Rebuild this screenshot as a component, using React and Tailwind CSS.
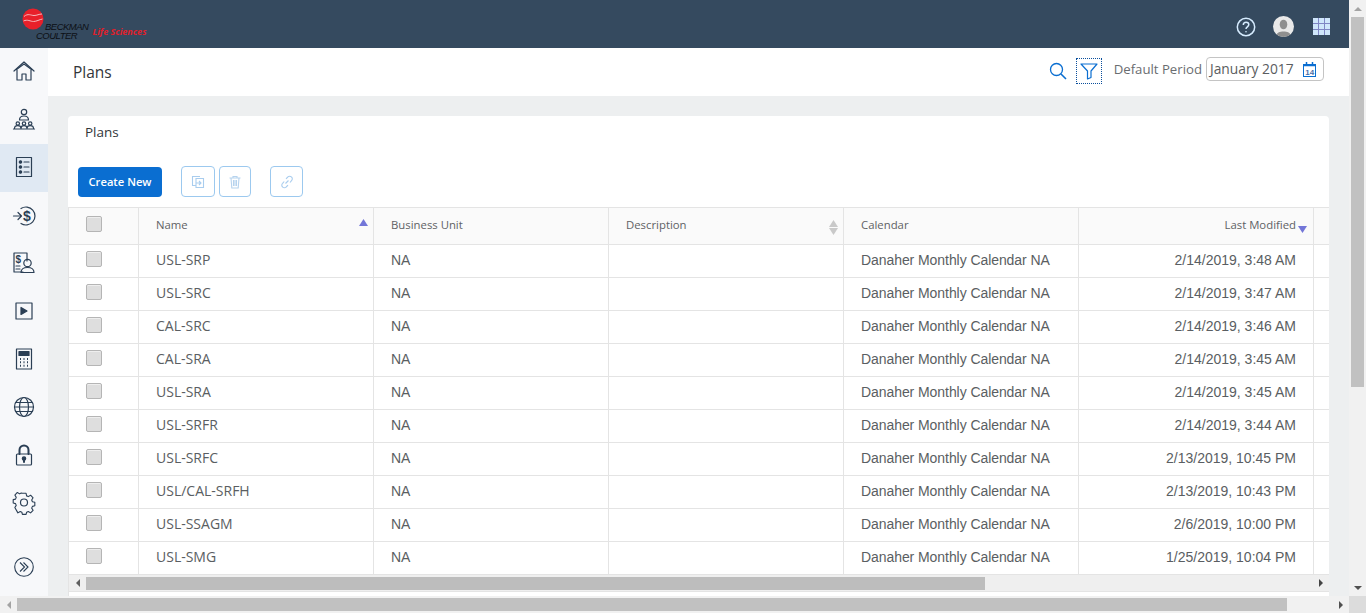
import React from "react";

const rows = [
  ["USL-SRP", "2/14/2019, 3:48 AM"],
  ["USL-SRC", "2/14/2019, 3:47 AM"],
  ["CAL-SRC", "2/14/2019, 3:46 AM"],
  ["CAL-SRA", "2/14/2019, 3:45 AM"],
  ["USL-SRA", "2/14/2019, 3:45 AM"],
  ["USL-SRFR", "2/14/2019, 3:44 AM"],
  ["USL-SRFC", "2/13/2019, 10:45 PM"],
  ["USL/CAL-SRFH", "2/13/2019, 10:43 PM"],
  ["USL-SSAGM", "2/6/2019, 10:00 PM"],
  ["USL-SMG", "1/25/2019, 10:04 PM"],
];

const S = ({ children, w = 24, h = 24, vb = "0 0 24 24", c = "#2b3f55", sw = 1.2 }) => (
  <svg width={w} height={h} viewBox={vb} fill="none" stroke={c} strokeWidth={sw} strokeLinecap="round" strokeLinejoin="round">
    {children}
  </svg>
);

const navIcons = [
  <S key="h"><path d="M2 12 12 3l10 9" /><path d="M4.500 10.500 12 5l7.500 5.500" /><path d="M5 11v10h5v-6h4v6h5V11" /></S>,
  <S key="o"><circle cx="12" cy="5" r="2.700" /><path d="M7.500 13c0-3 2-4 4.500-4s4.500 1 4.500 4z" /><circle cx="5.800" cy="16.500" r="1.700" /><circle cx="12" cy="16.500" r="1.700" /><circle cx="18.200" cy="16.500" r="1.700" /><path d="M2.500 21.500c0-2 1.500-2.800 3.300-2.800s3.200.8 3.200 2.800M9 21.500c0-2 1.200-2.800 3-2.800s3 .8 3 2.800M15 21.500c0-2 1.400-2.800 3.200-2.800s3.300.8 3.300 2.800" /><path d="M1.500 22h21" /></S>,
  <S key="l"><rect x="4.500" y="2.500" width="15" height="19" /><circle cx="8.500" cy="7" r="1.200" fill="#2b3f55" /><circle cx="8.500" cy="12" r="1.200" fill="#2b3f55" /><circle cx="8.500" cy="17" r="1.200" fill="#2b3f55" /><path d="M12 7h5M12 12h5M12 17h5" /></S>,
  <S key="d"><path d="M9 5.500A9 9 0 1 1 9 20.500" /><path d="M1.500 13H9M6 9.500 9.500 13 6 16.500" /><text x="11" y="18" fontSize="14" fontWeight="700" fill="#2b3f55" stroke="none" fontFamily="Liberation Sans">$</text></S>,
  <S key="p"><path d="M11 21H2V2h13v8" /><text x="3.500" y="12" fontSize="10" fontWeight="700" fill="#2b3f55" stroke="none" fontFamily="Liberation Sans">$</text><path d="M4 15h4M4 18h4" /><circle cx="15.500" cy="12" r="3.700" /><path d="M9 21.500c0-3.500 2.500-5 6.500-5s6.500 1.500 6.500 5z" /></S>,
  <S key="v"><rect x="4" y="4" width="16" height="16" /><path d="M9 8.500v7l6-3.500z" fill="#2b3f55" /></S>,
  <S key="c"><rect x="4.500" y="2" width="15" height="20" /><rect x="7" y="4.500" width="10" height="4" fill="#2b3f55" /><path d="M8 12h1M11.500 12h1M15 12h1M8 15.300h1M11.500 15.300h1M15 15.300h1M8 18.700h1M11.500 18.700h1M15 18.700h1" strokeWidth="2" strokeLinecap="butt" /></S>,
  <S key="g"><circle cx="12" cy="12" r="9.500" /><ellipse cx="12" cy="12" rx="4.500" ry="9.500" /><path d="M2.500 12h19M3.800 7.500h16.400M3.800 16.500h16.400" /></S>,
  <S key="k"><path d="M7.500 11V7a4.500 4.500 0 0 1 9 0v4" strokeWidth="2" /><rect x="4.500" y="11" width="15" height="11" rx="1" /><circle cx="12" cy="15.500" r="1.700" fill="#2b3f55" /><path d="M12 16v3" strokeWidth="2" /></S>,
  <S key="s"><path d="M10 2.500h4l.6 2.800 1.800.8 2.500-1.500 2.700 2.800-1.500 2.400.8 1.900 2.600.6v3.800l-2.600.6-.8 1.900 1.500 2.400-2.700 2.800-2.500-1.500-1.800.8-.6 2.300h-4l-.6-2.300-1.800-.8-2.500 1.500L1.800 18l1.500-2.400-.8-1.900L0 13V9.400l2.500-.6.800-1.900L1.800 4.400l2.700-2.800L7 3.100l1.800-.8z" transform="translate(1.200 0) scale(.92)" /><circle cx="12" cy="11.500" r="3.500" /></S>,
];

const cell = "border-l border-[#e4e4e4] h-full flex items-center pb-[2px]";

function Check() {
  return <span className="block w-4 h-4 rounded-[2px] bg-[#dedede] border border-[#b5b5b5] shadow-[inset_0_1px_0_#eeeeee]" />;
}

function Arrow({ d, c = "#5f5f5f" }) {
  const map = {
    up: "M0 4 4 0l4 4z",
    down: "M0 0h8L4 4z",
    left: "M4 0v8L0 4z",
    right: "M0 0v8l4-4z",
  };
  const vert = d === "up" || d === "down";
  return (
    <svg width={vert ? 8 : 4} height={vert ? 4 : 8} viewBox={vert ? "0 0 8 4" : "0 0 4 8"} fill={c}>
      <path d={map[d]} />
    </svg>
  );
}

function SortTri({ dir, c }) {
  return (
    <svg width="9" height="7" viewBox="0 0 9 7" fill={c}>
      <path d={dir === "up" ? "M4.500 0 9 7H0z" : "M0 0h9L4.500 7z"} />
    </svg>
  );
}

function Logo() {
  return (
    <div className="flex items-start w-[150px] h-full relative">
      <svg width="22" height="22" viewBox="0 0 22 22" className="mt-[8px] ml-[22px] shrink-0">
        <circle cx="11" cy="11" r="10.500" fill="#e8202a" />
        <path d="M2 8.500c4-3.500 7-1 10-1s5-1.500 8-1.500M1.500 13c4-2 7 .5 10 .5s6-2 9-2.500" stroke="#f6b9bc" strokeWidth="1" fill="none" />
      </svg>
      <div className="ml-[-1px] mt-[22px] text-[#0c0f14] italic font-['Liberation_Sans',sans-serif] text-[9.5px] leading-[9px] tracking-[-0.5px] font-normal shrink-0">
        <div className="ml-[2px]">BECKMAN</div>
        <div className="ml-[-7px]">COULTER</div>
      </div>
      <div className="ml-[4px] mt-[26px] text-[#e01f2b] italic font-bold text-[9px] leading-[11px] whitespace-nowrap font-['Open_Sans',sans-serif]">Life Sciences</div>
    </div>
  );
}

export default function App() {
  return (
    <div className="w-[1366px] h-[613px] overflow-hidden flex flex-col bg-white font-['Liberation_Sans',sans-serif]">
      <div className="flex h-[596px] shrink-0">
        <div className="w-[1349px] flex flex-col">
          {/* top bar */}
          <header className="h-[48px] bg-[#354a5f] flex items-center justify-between shrink-0 pr-[19px]">
            <Logo />
            <div className="flex items-center mt-[5px]">
              <svg width="20" height="20" viewBox="0 0 20 20" fill="none" stroke="#d6ecff" strokeWidth="1.500">
                <circle cx="10" cy="10" r="8.700" />
                <path d="M7.300 8c0-1.700 1.200-2.800 2.800-2.800 1.500 0 2.700 1 2.700 2.400 0 2.200-2.800 2.200-2.800 4.400" />
                <circle cx="10" cy="14.800" r=".8" fill="#d6ecff" stroke="none" />
              </svg>
              <div className="ml-[17px] w-[21px] h-[21px] rounded-full bg-[#e9e9e9] overflow-hidden">
                <svg width="21" height="21" viewBox="0 0 21 21" fill="#8f8f8f">
                  <ellipse cx="10.500" cy="8.500" rx="3.800" ry="4.800" />
                  <path d="M3 21c0-4.500 4-5.500 7.500-5.500S18 16.500 18 21z" />
                </svg>
              </div>
              <div className="ml-[19px] grid grid-cols-3 gap-[1px] w-[17px] h-[17px] bg-[#7f86c4]">
                {Array.from({ length: 9 }).map((_, i) => (
                  <span key={i} className="bg-[#cfe6fb]" />
                ))}
              </div>
            </div>
          </header>

          <div className="flex flex-1 min-h-0">
            {/* sidebar */}
            <aside className="w-[48px] bg-[#f7f8fa] shrink-0 flex flex-col items-center">
              {navIcons.map((ic, i) => (
                <div key={i} className={`w-full h-[48px] flex items-center justify-center shrink-0 pb-[2px] ${i === 2 ? "bg-[#e0e9f3]" : ""}`}>
                  {ic}
                </div>
              ))}
              <div className="mt-[15px] h-[48px] flex items-center justify-center">
                <svg width="20" height="20" viewBox="0 0 20 20" fill="none" stroke="#2b3f55" strokeWidth="1.100">
                  <circle cx="10" cy="10" r="9.300" />
                  <path d="M6 5.500 10.500 10 6 14.500M9.500 5.500 14 10l-4.500 4.500" />
                </svg>
              </div>
            </aside>

            <div className="flex-1 flex flex-col min-w-0">
              {/* title bar */}
              <div className="h-[48px] bg-white shrink-0 flex items-center justify-between pl-[25px] pr-[25px]">
                <div className="text-[#32363a] text-[15.5px] leading-[22px] font-['Open_Sans',sans-serif]">Plans</div>
                <div className="flex items-center text-[#6a6d70] pb-[6px]">
                  <svg width="18" height="18" viewBox="0 0 18 18" fill="none" stroke="#0a6ed1" strokeWidth="1.300" className="mt-[3px] ml-[1px]">
                    <circle cx="7.500" cy="7.500" r="6" />
                    <path d="m12 12 5 5" strokeWidth="1.600" />
                  </svg>
                  <div className="ml-[9px] mt-[4px] w-[26px] h-[26px] border border-dotted border-[#0a4f9c] flex items-center justify-center">
                    <svg width="18" height="18" viewBox="0 0 18 18" fill="none" stroke="#0a6ed1" strokeWidth="1.200" strokeLinejoin="round">
                      <path d="M1 2h16l-6 7v6.500L7.500 17V9z" />
                    </svg>
                  </div>
                  <div className="ml-[12px] mt-[2px] font-['Open_Sans',sans-serif] text-[13.2px]">Default Period</div>
                  <div className="ml-[4px] w-[118px] h-[24px] border border-[#c4c4c4] rounded-[4px] flex items-center justify-between pl-[3px] pr-[7px] text-[#5a5d60]">
                    <span className="font-['Open_Sans',sans-serif] text-[13.8px]">January 2017</span>
                    <svg width="13" height="15" viewBox="0 0 13 15" fill="none" stroke="#0a6ed1">
                      <rect x=".5" y="2.500" width="12" height="12" />
                      <path d="M0 3.500h13M3.500 0v3M9.500 0v3" strokeWidth="1.500" />
                      <text x="2.200" y="12.500" fontSize="8" fontWeight="700" fill="#4a6fa8" stroke="none" fontFamily="Liberation Sans">14</text>
                    </svg>
                  </div>
                </div>
              </div>

              {/* content */}
              <div className="flex-1 bg-[#edeff0] pt-[20px] pl-[20px] pr-[20px] min-h-0">
                <div className="h-full bg-white rounded-t-[4px] flex flex-col overflow-hidden">
                  <div className="h-[33px] pl-[17px] pt-[7px] text-[13.5px] leading-[18px] text-[#32363a] font-['Open_Sans',sans-serif] shrink-0">Plans</div>
                  <div className="flex items-end h-[48px] pl-[10px] shrink-0">
                    <button className="w-[84px] h-[30px] rounded-[4px] bg-[#0a6ed1] text-white text-[11.2px] font-semibold font-['Open_Sans',sans-serif]">Create New</button>
                    <div className="ml-[19px] w-[34px] h-[31px] border border-[#9cc9ef] rounded-[4px] flex items-center justify-center">
                      <svg width="14" height="14" viewBox="0 0 14 14" fill="none" stroke="#a9cdee" strokeWidth="1.100">
                        <path d="M9 1.500H1.500v9H5M5 3.500h7.500v9H5z" />
                        <path d="M5 8h5M8 6l2 2-2 2" />
                      </svg>
                    </div>
                    <div className="ml-[4px] w-[32px] h-[31px] border border-[#9cc9ef] rounded-[4px] flex items-center justify-center">
                      <svg width="14" height="14" viewBox="0 0 14 14" fill="none" stroke="#b6d3ee" strokeWidth="1.100">
                        <path d="M1.500 3h11M5 3V1.500h4V3M3 3l.8 10h6.400L11 3M5.500 5v6M7 5v6M8.500 5v6" />
                      </svg>
                    </div>
                    <div className="ml-[19px] w-[33px] h-[31px] border border-[#9cc9ef] rounded-[4px] flex items-center justify-center">
                      <svg width="14" height="14" viewBox="0 0 14 14" fill="none" stroke="#a9cdee" strokeWidth="1.100">
                        <path d="m5.500 8.500 3-3M6 3.800 7.800 2a2.400 2.400 0 0 1 3.600 0h.1a2.400 2.400 0 0 1 0 3.600L10 7.500M8 10.200 6.200 12a2.400 2.400 0 0 1-3.600 0 2.400 2.400 0 0 1 0-3.600L4.200 6.500" />
                      </svg>
                    </div>
                  </div>

                  {/* table */}
                  <div className="mt-[10px] ml-0 flex-1 min-h-0 flex flex-col border-t border-[#e4e4e4] border-l">
                    <div className="flex h-[37px] bg-[#fafafa] border-b border-[#e4e4e4] shrink-0 text-[11.35px] text-[#5f6265] font-['Open_Sans',sans-serif]">
                      <div className="w-[69px] h-full flex items-center pl-[17px] shrink-0 pb-[4px]"><Check /></div>
                      <div className={`${cell} w-[235px] pl-[17px] relative`}>
                        Name
                        <span className="absolute right-[5px] top-[11px]"><SortTri dir="up" c="#7376d8" /></span>
                      </div>
                      <div className={`${cell} w-[235px] pl-[17px]`}>Business Unit</div>
                      <div className={`${cell} w-[235px] pl-[17px] relative`}>
                        Description
                        <span className="absolute right-[5px] top-[12px] flex flex-col gap-[1px]">
                          <SortTri dir="up" c="#c9c9c9" />
                          <SortTri dir="down" c="#c9c9c9" />
                        </span>
                      </div>
                      <div className={`${cell} w-[235px] pl-[17px]`}>Calendar</div>
                      <div className={`${cell} w-[235px] pr-[17px] justify-end relative`}>
                        Last Modified
                        <span className="absolute right-[6px] top-[18px]"><SortTri dir="down" c="#7376d8" /></span>
                      </div>
                      <div className={`${cell} flex-1`} />
                    </div>
                    {rows.map(([name, date]) => (
                      <div key={name} className="flex h-[33px] border-b border-[#e4e4e4] shrink-0 text-[14px] text-[#5a5e62]">
                        <div className="w-[69px] h-full flex items-center pl-[17px] shrink-0 pb-[4px]"><Check /></div>
                        <div className="border-l border-[#e4e4e4] h-full flex items-center pb-[4px] w-[235px] pl-[17px] font-['Open_Sans',sans-serif] text-[14px]">{name}</div>
                        <div className={`${cell} w-[235px] pl-[17px]`}>NA</div>
                        <div className={`${cell} w-[235px]`} />
                        <div className={`${cell} w-[235px] pl-[17px] tracking-[-0.07px]`}>Danaher Monthly Calendar NA</div>
                        <div className={`${cell} w-[235px] pr-[17px] justify-end`}>{date}</div>
                        <div className={`${cell} flex-1`} />
                      </div>
                    ))}
                    {/* inner scrollbar */}
                    <div className="h-[17px] bg-[#efefef] flex items-center shrink-0 border-b border-[#e4e4e4]">
                      <div className="w-[17px] flex justify-center shrink-0"><Arrow d="left" /></div>
                      <div className="w-[899px] h-[13px] bg-[#bdbdbd] shrink-0" />
                      <div className="flex-1" />
                      <div className="w-[17px] flex justify-center shrink-0"><Arrow d="right" c="#444444" /></div>
                    </div>
                  </div>
                </div>
              </div>
            </div>
          </div>
        </div>

        {/* page vertical scrollbar */}
        <div className="w-[17px] bg-[#f1f1f1] flex flex-col items-center">
          <div className="h-[17px] flex items-center justify-center shrink-0"><Arrow d="up" c="#a3a3a3" /></div>
          <div className="w-[13px] h-[370px] bg-[#c1c1c1] shrink-0" />
          <div className="flex-1" />
          <div className="h-[17px] flex items-center justify-center shrink-0"><Arrow d="down" c="#505050" /></div>
        </div>
      </div>

      {/* page horizontal scrollbar */}
      <div className="h-[17px] bg-[#f1f1f1] flex items-center shrink-0">
        <div className="w-[17px] flex justify-center shrink-0"><Arrow d="left" c="#a3a3a3" /></div>
        <div className="w-[1270px] h-[13px] bg-[#c1c1c1] shrink-0" />
        <div className="flex-1" />
        <div className="w-[17px] flex justify-center shrink-0"><Arrow d="right" c="#505050" /></div>
        <div className="w-[17px] h-full bg-[#dcdcdc] shrink-0" />
      </div>
    </div>
  );
}
